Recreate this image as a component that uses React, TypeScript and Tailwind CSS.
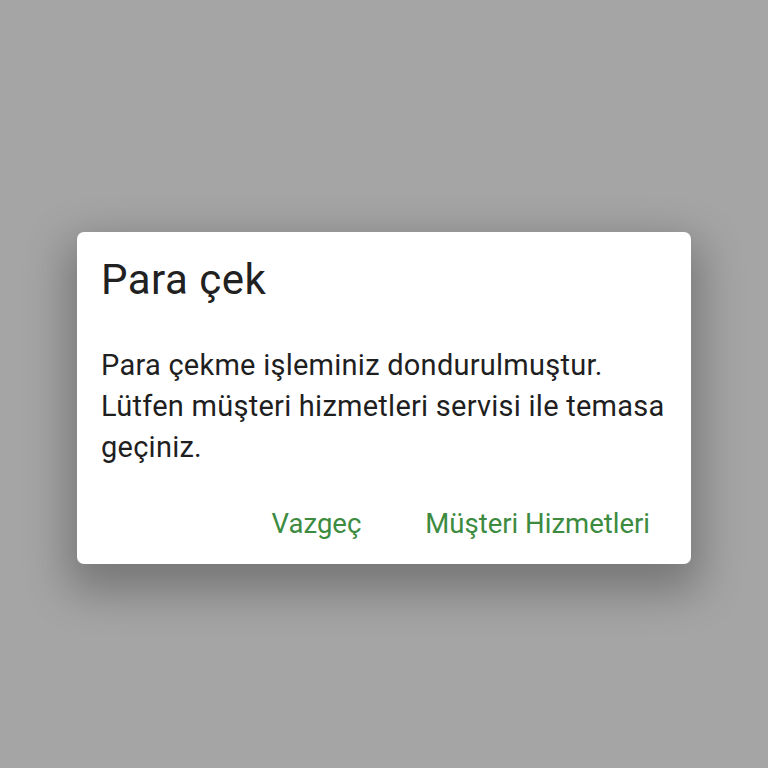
export default function App() {
  return (
    <div className="w-[768px] h-[768px] bg-[#a5a5a5] flex flex-col items-start pt-[232px] pl-[77px]" style={{ fontFamily: 'Roboto, "Noto Sans", sans-serif' }}>
      <div className="w-[614px] h-[332px] bg-white rounded-[7px] shadow-[0_18px_44px_10px_rgba(0,0,0,0.28)] flex flex-col pt-[23px] pl-[24px] pr-[41px]">
        <div className="text-[42px] leading-[50px] tracking-[0.5px] text-[#212121]">Para çek</div>
        <div className="mt-[40px] whitespace-nowrap text-[29px] leading-[41px] tracking-[0.25px] text-[#1f1f1f]">
          Para çekme işleminiz dondurulmuştur.
          <br />
          Lütfen müşteri hizmetleri servisi ile temasa
          <br />
          geçiniz.
        </div>
        <div className="mt-[35px] flex justify-end gap-[64px] whitespace-nowrap text-[27.5px] leading-[41px] text-[#3d8b40]">
          <span>Vazgeç</span>
          <span>Müşteri Hizmetleri</span>
        </div>
      </div>
    </div>
  );
}
